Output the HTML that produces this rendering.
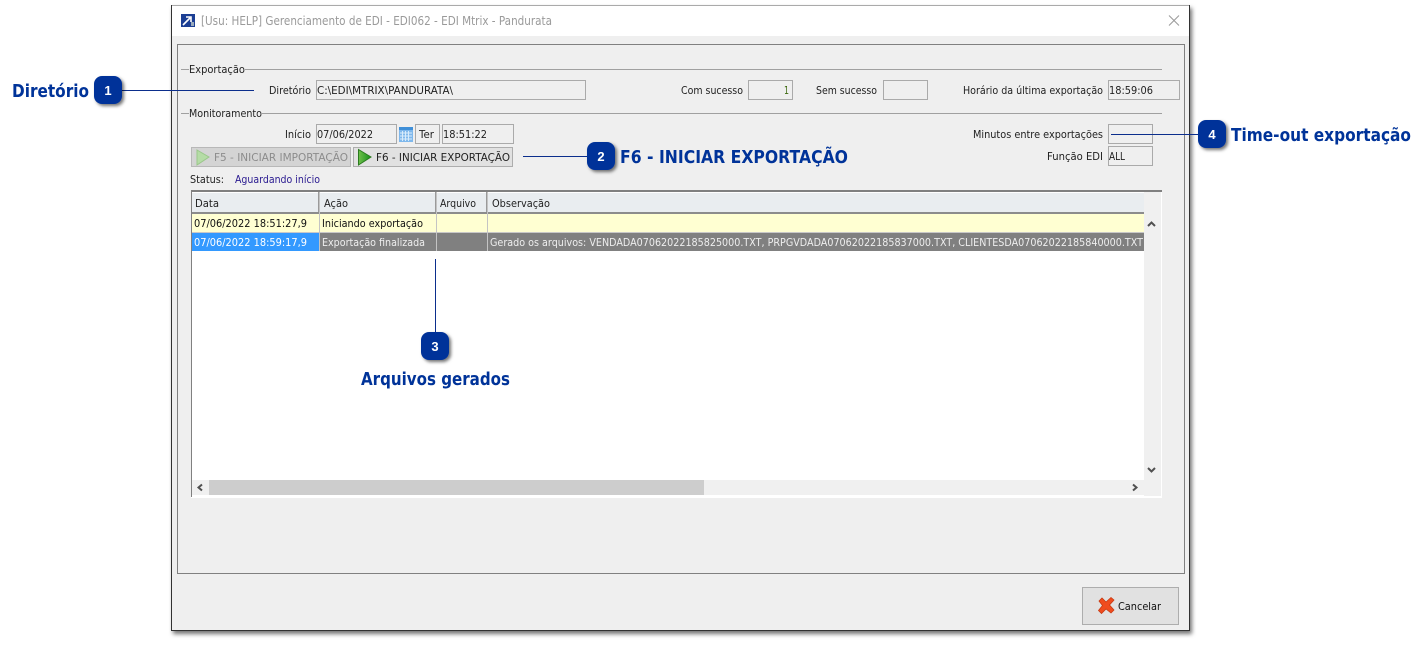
<!DOCTYPE html>
<html><head><meta charset="utf-8"><style>
html,body{margin:0;padding:0;background:#fff;width:1427px;height:647px;overflow:hidden}
svg{display:block}
text{font-family:"DejaVu Sans","Liberation Sans",sans-serif;font-size:11px;fill:#222}
.l{font-family:"DejaVu Sans","Liberation Sans",sans-serif;font-weight:bold;font-size:18px;fill:#003399}
.n{font-family:"Liberation Sans",sans-serif;font-weight:bold;font-size:13px;fill:#fff}
.b{fill:#efefef;stroke:#aaa;stroke-width:1}
</style></head><body>
<svg width="1427" height="647" viewBox="0 0 1427 647" xmlns="http://www.w3.org/2000/svg">
<defs>
<filter id="s" x="-30%" y="-30%" width="170%" height="170%"><feDropShadow dx="2" dy="2" stdDeviation="1.5" flood-color="#000" flood-opacity=".55"/></filter>
<filter id="w" x="-2%" y="-2%" width="104%" height="105%"><feDropShadow dx="2" dy="3" stdDeviation="2" flood-color="#000" flood-opacity=".55"/></filter>
<linearGradient id="g" x1="0" y1="0" x2="1" y2="0"><stop offset="0" stop-color="#6fc04a"/><stop offset="1" stop-color="#14901c"/></linearGradient>
</defs>
<!-- window -->
<rect x="171.500" y="5.500" width="1018" height="625" fill="#efefef" stroke="#333" filter="url(#w)"/>
<rect x="172" y="6" width="1017" height="30" fill="#fff"/>
<rect x="172" y="5" width="1017" height="1" fill="#aaa"/>
<!-- title icon -->
<rect x="181" y="14" width="14" height="13" fill="#1c3f94"/>
<path d="M183 25L190 18M186 17h5v5" stroke="#fff" stroke-width="1.600" fill="none"/>
<rect x="191" y="22" width="3" height="4" fill="#9ab"/>
<text x="201" y="25" textLength="351" lengthAdjust="spacingAndGlyphs" style="font-size:12px;fill:#9a9a9a">[Usu: HELP] Gerenciamento de EDI - EDI062 - EDI Mtrix - Pandurata</text>
<path d="M1169 15.500L1179 25.500M1179 15.500L1169 25.500" stroke="#999" stroke-width="1" fill="none"/>
<!-- inner frame -->
<rect x="177.500" y="44.500" width="1007" height="529" fill="#efefef" stroke="#808080"/>
<!-- group lines -->
<path d="M181 69.500h8M245 69.500H1162M181 113.500h8M262 113.500H1162" stroke="#a0a0a0" fill="none"/>
<text x="189" y="73" textLength="56" lengthAdjust="spacingAndGlyphs">Exportação</text>
<text x="189" y="117" textLength="73" lengthAdjust="spacingAndGlyphs">Monitoramento</text>
<!-- row 1 -->
<text x="269" y="94" textLength="42" lengthAdjust="spacingAndGlyphs">Diretório</text>
<rect class="b" x="316.500" y="80.500" width="269" height="19"/>
<text x="317" y="94" textLength="136" lengthAdjust="spacingAndGlyphs">C:\EDI\MTRIX\PANDURATA\</text>
<text x="681" y="94" textLength="62" lengthAdjust="spacingAndGlyphs">Com sucesso</text>
<rect class="b" x="748.500" y="80.500" width="44" height="19"/>
<text x="784" y="94" textLength="5" lengthAdjust="spacingAndGlyphs" style="fill:#3d6a10">1</text>
<text x="816" y="94" textLength="61" lengthAdjust="spacingAndGlyphs">Sem sucesso</text>
<rect class="b" x="883.500" y="80.500" width="44" height="19"/>
<text x="963" y="94" textLength="140" lengthAdjust="spacingAndGlyphs">Horário da última exportação</text>
<rect class="b" x="1108.500" y="80.500" width="71" height="19"/>
<text x="1109" y="94" textLength="44" lengthAdjust="spacingAndGlyphs">18:59:06</text>
<!-- row 2 -->
<text x="285" y="138" textLength="26" lengthAdjust="spacingAndGlyphs">Início</text>
<rect class="b" x="316.500" y="124.500" width="80" height="19"/>
<text x="317" y="138" textLength="56" lengthAdjust="spacingAndGlyphs">07/06/2022</text>
<rect x="399" y="127" width="14" height="15" fill="#7fb8ec"/>
<rect x="399" y="127" width="14" height="3" fill="#3f8fd8"/>
<path d="M400 133h12M400 136h12M400 139h12M402.500 131v10M405.500 131v10M408.500 131v10" stroke="#d8ecfb" stroke-width="1" fill="none"/>
<rect class="b" x="415.500" y="124.500" width="24" height="19"/>
<text x="419" y="138" textLength="15" lengthAdjust="spacingAndGlyphs">Ter</text>
<rect class="b" x="442.500" y="124.500" width="71" height="19"/>
<text x="443" y="138" textLength="44" lengthAdjust="spacingAndGlyphs">18:51:22</text>
<text x="973" y="138" textLength="130" lengthAdjust="spacingAndGlyphs">Minutos entre exportações</text>
<rect class="b" x="1108.500" y="124.500" width="44" height="19"/>
<text x="1047" y="160" textLength="56" lengthAdjust="spacingAndGlyphs">Função EDI</text>
<rect class="b" x="1108.500" y="146.500" width="44" height="19"/>
<text x="1109" y="160" textLength="16" lengthAdjust="spacingAndGlyphs">ALL</text>
<!-- buttons -->
<rect x="191.500" y="147.500" width="159" height="19" fill="#d4d4d4" stroke="#b8b8b8"/>
<path d="M197 150l12 7-12 8z" fill="#b5dca6" stroke="#9ac78a"/>
<text x="214" y="161" textLength="134" lengthAdjust="spacingAndGlyphs" style="fill:#8c8c8c">F5 - INICIAR IMPORTAÇÃO</text>
<rect x="353.500" y="147.500" width="159" height="19" fill="#e1e1e1" stroke="#adadad"/>
<path d="M358.500 149.500l12.500 7.500-12.500 8z" fill="url(#g)" stroke="#2a7a1e"/>
<text x="376" y="161" textLength="134" lengthAdjust="spacingAndGlyphs">F6 - INICIAR EXPORTAÇÃO</text>
<!-- status -->
<text x="190" y="183" textLength="34" lengthAdjust="spacingAndGlyphs">Status:</text>
<text x="235" y="183" textLength="85" lengthAdjust="spacingAndGlyphs" style="fill:#2a1a90">Aguardando início</text>
<!-- table -->
<rect x="191" y="191" width="971" height="307" fill="#fff"/>
<rect x="191" y="190" width="971" height="2" fill="#808080"/>
<rect x="191" y="190" width="1" height="307" fill="#808080"/>
<rect x="1144" y="192" width="17" height="304" fill="#f0f0f0"/>
<rect x="192" y="193" width="952" height="19" fill="#e9edf0"/>
<rect x="192" y="212" width="952" height="2" fill="#8c8c8c"/>
<rect x="192" y="214" width="952" height="18" fill="#ffffd2"/>
<rect x="192" y="233" width="127" height="18" fill="#3399ff"/>
<rect x="320" y="233" width="824" height="18" fill="#808080"/>
<rect x="192" y="232" width="952" height="1" fill="#c8c8c8"/>
<rect x="319" y="192" width="1" height="59" fill="#c4c4c4"/>
<rect x="318" y="192" width="1" height="20" fill="#9a9a9a"/>
<rect x="436" y="192" width="1" height="59" fill="#c4c4c4"/>
<rect x="435" y="192" width="1" height="20" fill="#9a9a9a"/>
<rect x="487" y="192" width="1" height="59" fill="#c4c4c4"/>
<rect x="486" y="192" width="1" height="20" fill="#9a9a9a"/>
<text x="195" y="207" textLength="24" lengthAdjust="spacingAndGlyphs">Data</text>
<text x="324" y="207" textLength="24" lengthAdjust="spacingAndGlyphs">Ação</text>
<text x="440" y="207" textLength="36" lengthAdjust="spacingAndGlyphs">Arquivo</text>
<text x="492" y="207" textLength="58" lengthAdjust="spacingAndGlyphs">Observação</text>
<text x="194" y="227" textLength="113" lengthAdjust="spacingAndGlyphs" style="fill:#111">07/06/2022 18:51:27,9</text>
<text x="322" y="227" textLength="101" lengthAdjust="spacingAndGlyphs" style="fill:#111">Iniciando exportação</text>
<text x="194" y="246" textLength="113" lengthAdjust="spacingAndGlyphs" style="fill:#fff">07/06/2022 18:59:17,9</text>
<text x="322" y="246" textLength="103" lengthAdjust="spacingAndGlyphs" style="fill:#eee">Exportação finalizada</text>
<text x="490" y="246" textLength="653" lengthAdjust="spacingAndGlyphs" style="fill:#eee">Gerado os arquivos: VENDADA07062022185825000.TXT, PRPGVDADA07062022185837000.TXT, CLIENTESDA07062022185840000.TXT</text>
<!-- scrollbars -->
<rect x="192" y="480" width="969" height="15" fill="#f0f0f0"/>
<rect x="209" y="480" width="495" height="15" fill="#cdcdcd"/>
<path d="M1148 226l3.500-3.500 3.500 3.500M1148 468l3.500 3.500 3.500-3.500M202 484.500l-3.500 3 3.500 3M1133 484.500l3.500 3-3.500 3" stroke="#505050" stroke-width="2" fill="none"/>
<!-- cancel -->
<rect x="1082.500" y="587.500" width="96" height="37" fill="#e1e1e1" stroke="#adadad"/>
<path d="M1099 601l3-3 4 4 5-4.500 3 2.500-4.500 5 4.500 5-3 3-5-4-4.500 4.500-3-3 4-5z" fill="#f04c1e" stroke="#c73a12" stroke-width=".8"/>
<text x="1118" y="610" textLength="43" lengthAdjust="spacingAndGlyphs" style="fill:#111">Cancelar</text>
<!-- callouts -->
<path d="M122 90.500H254M523 156.500H587M1111 134.500H1198M435.500 259V332" stroke="#0b2e8c" stroke-width="1" fill="none"/>
<rect x="94" y="76" width="28" height="28" rx="8" fill="#003399" filter="url(#s)"/>
<rect x="587" y="142" width="28" height="28" rx="8" fill="#003399" filter="url(#s)"/>
<rect x="421" y="332" width="28" height="28" rx="8" fill="#003399" filter="url(#s)"/>
<rect x="1198" y="120" width="28" height="28" rx="8" fill="#003399" filter="url(#s)"/>
<text class="n" x="108" y="95" text-anchor="middle">1</text>
<text class="n" x="601" y="161" text-anchor="middle">2</text>
<text class="n" x="435" y="351" text-anchor="middle">3</text>
<text class="n" x="1212" y="139" text-anchor="middle">4</text>
<text class="l" x="12" y="97" textLength="77" lengthAdjust="spacingAndGlyphs">Diretório</text>
<text class="l" x="620" y="163" textLength="228" lengthAdjust="spacingAndGlyphs">F6 - INICIAR EXPORTAÇÃO</text>
<text class="l" x="1231" y="141" textLength="180" lengthAdjust="spacingAndGlyphs">Time-out exportação</text>
<text class="l" x="361" y="385" textLength="149" lengthAdjust="spacingAndGlyphs">Arquivos gerados</text>
</svg>
</body></html>
